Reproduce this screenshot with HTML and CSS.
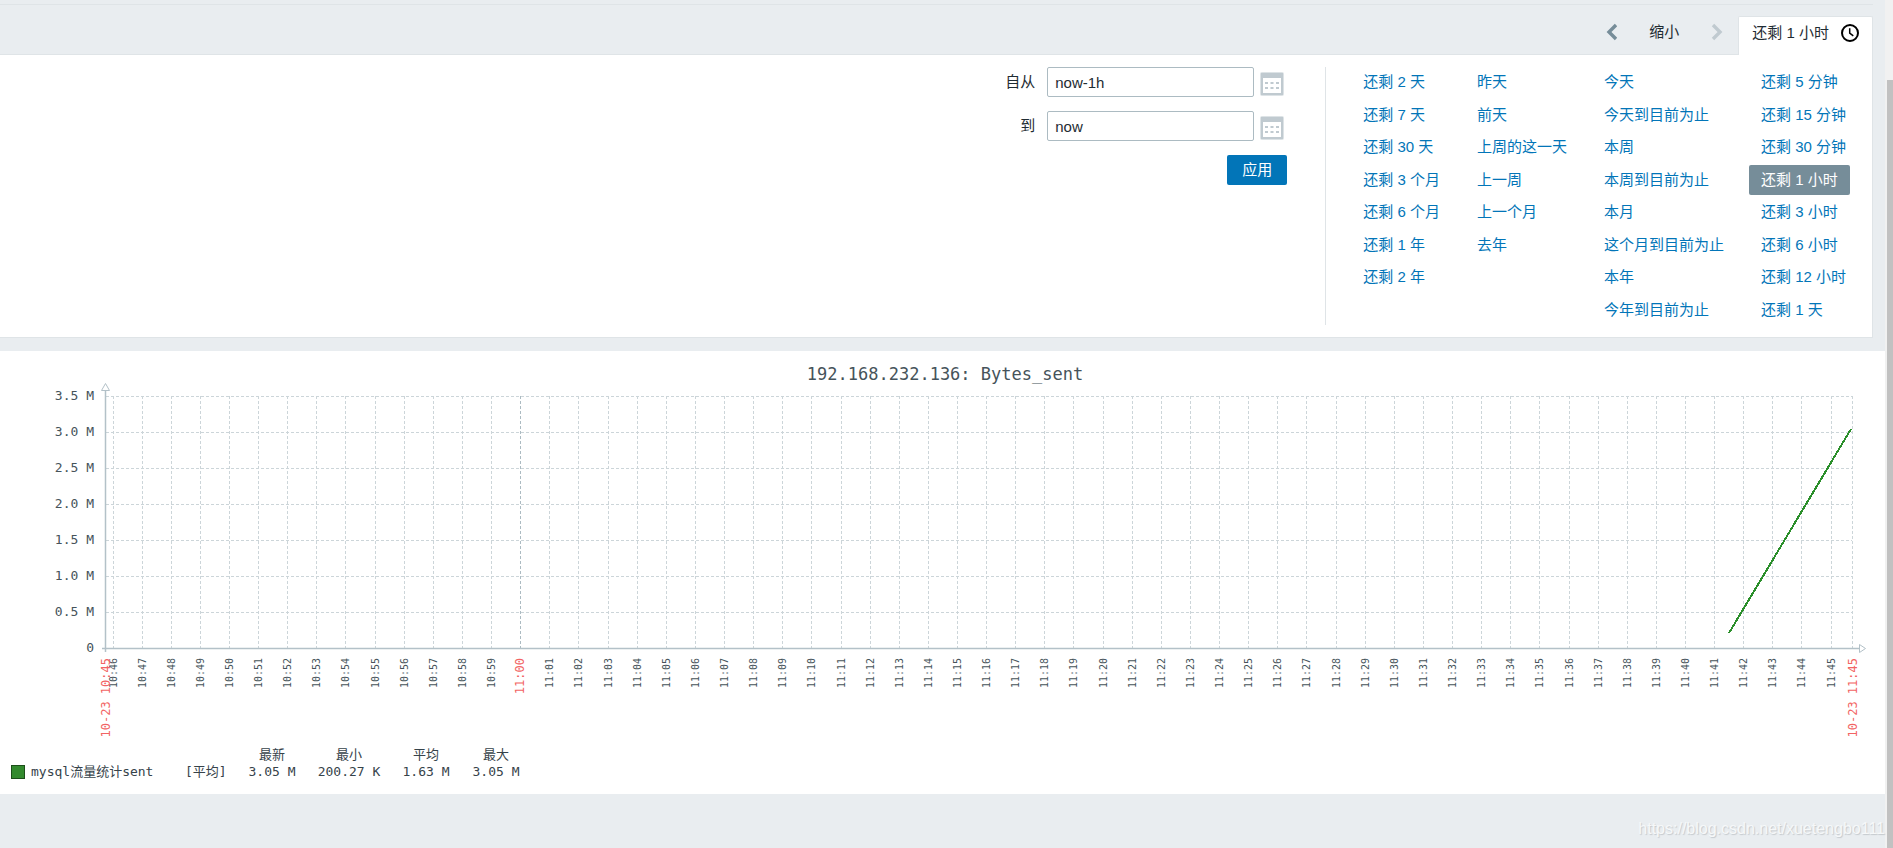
FILE: index.html
```html
<!DOCTYPE html>
<html lang="zh-CN">
<head>
<meta charset="utf-8">
<title>192.168.232.136: Bytes_sent</title>
<link rel="stylesheet" href="styles.css">
</head>
<body>
<div class="page">
  <main class="content">
    <section class="filter">
      <nav class="tabs">
        <button class="arrow" type="button" aria-label="上一段"><svg width="12" height="18" viewBox="0 0 12 18"><path d="M11 2L4 9l7 7" fill="none" stroke="#768d99" stroke-width="3.4"/></svg></button>
        <button class="zoom-out" type="button">缩小</button>
        <button class="arrow" type="button" aria-label="下一段" disabled><svg width="12" height="18" viewBox="0 0 12 18"><path d="M2 2l7 7-7 7" fill="none" stroke="#c0cad0" stroke-width="3.4"/></svg></button>
        <button class="tab" type="button">还剩 1 小时
          <svg width="18" height="18" viewBox="0 0 18 18"><circle cx="9" cy="9" r="8" fill="none" stroke="#000" stroke-width="2"/><path d="M8.7 4.2v5l3.6 2.6" fill="none" stroke="#000" stroke-width="1.5"/></svg>
        </button>
      </nav>
      <div class="panel">
        <form class="range">
          <label for="from">自从</label>
          <input id="from" type="text" value="now-1h">
          <button class="calendar" type="button" aria-label="选择开始时间"><svg width="24" height="24" viewBox="0 0 24 24"><use href="#calendar"/></svg></button>
          <label for="to">到</label>
          <input id="to" type="text" value="now">
          <button class="calendar" type="button" aria-label="选择结束时间"><svg width="24" height="24" viewBox="0 0 24 24"><use href="#calendar"/></svg></button>
          <button class="apply" type="button">应用</button>
        </form>
        <div class="presets">
          <ul>
            <li><a href="#">还剩 2 天</a></li><li><a href="#">还剩 7 天</a></li><li><a href="#">还剩 30 天</a></li><li><a href="#">还剩 3 个月</a></li><li><a href="#">还剩 6 个月</a></li><li><a href="#">还剩 1 年</a></li><li><a href="#">还剩 2 年</a></li>
          </ul>
          <ul>
            <li><a href="#">昨天</a></li><li><a href="#">前天</a></li><li><a href="#">上周的这一天</a></li><li><a href="#">上一周</a></li><li><a href="#">上一个月</a></li><li><a href="#">去年</a></li>
          </ul>
          <ul>
            <li><a href="#">今天</a></li><li><a href="#">今天到目前为止</a></li><li><a href="#">本周</a></li><li><a href="#">本周到目前为止</a></li><li><a href="#">本月</a></li><li><a href="#">这个月到目前为止</a></li><li><a href="#">本年</a></li><li><a href="#">今年到目前为止</a></li>
          </ul>
          <ul>
            <li><a href="#">还剩 5 分钟</a></li><li><a href="#">还剩 15 分钟</a></li><li><a href="#">还剩 30 分钟</a></li><li><a class="selected" href="#">还剩 1 小时</a></li><li><a href="#">还剩 3 小时</a></li><li><a href="#">还剩 6 小时</a></li><li><a href="#">还剩 12 小时</a></li><li><a href="#">还剩 1 天</a></li>
          </ul>
        </div>
      </div>
    </section>

    <section class="graph">
      <svg class="plot" id="plot" viewBox="0 0 1885 395">
        <defs>
          <g id="calendar">
            <rect x="1" y="1" width="22" height="22" rx="1" fill="#fff" stroke="#dde3e6" stroke-width="2"/>
            <path d="M1 1h22v22H1zM3 6v15h18V6z" fill="#c0cad0" fill-rule="evenodd"/>
            <path d="M5 10h3v2H5zM10.500 10h3v2h-3zM16 10h3v2h-3zM5 15h3v2H5zM10.500 15h3v2h-3zM16 15h3v2h-3z" fill="#c0cad0"/>
          </g>
        </defs>
        <text class="title" x="945" y="29">192.168.232.136: Bytes_sent</text>
        <g id="grid"></g>
        <path class="axis" d="M105.500 40V301M102 297.500H1859"/>
        <path class="tip" d="M101.500 39.500h8l-4-7zM1859.500 293.500v8l6-4z"/>
        <path class="series" d="M1729 282L1851 78"/>
        <g id="labels"></g>
      </svg>
      <table class="legend">
        <thead><tr><td></td><td></td><td></td><th>最新</th><th>最小</th><th>平均</th><th>最大</th></tr></thead>
        <tbody><tr><td class="key"><span class="swatch"></span></td><td class="name">mysql流量统计sent</td><td class="fn">[平均]</td><td class="value">3.05 M</td><td class="value wide">200.27 K</td><td class="value">1.63 M</td><td class="value">3.05 M</td></tr></tbody>
      </table>
    </section>
  </main>
  <div class="scrollbar"><div class="thumb"></div></div>
</div>
<div class="watermark">https://blog.csdn.net/xuetengbo111</div>
<script src="graph.js"></script>
</body>
</html>
```
FILE: styles.css
```css
* { box-sizing: border-box; }
body {
  margin: 0;
  background: #e9edf0;
  color: #1f2c33;
  font: 15px/20px "Liberation Sans", "Noto Sans CJK SC", sans-serif;
}
button, input { font: inherit; color: inherit; margin: 0; }
button { border: 0; background: none; padding: 0; }
svg { display: block; }
.page { display: flex; min-height: 100vh; }
.content { flex: 1; min-width: 0; padding-top: 4px; }

.filter {
  margin-right: 12px;
  border-top: 1px solid #dfe4e7;
}
.tabs {
  display: flex;
  justify-content: flex-end;
  align-items: center;
  padding-top: 11px;
}
.arrow { width: 12px; }
.zoom-out { margin: 0 32px; }
.tab {
  display: flex;
  align-items: center;
  gap: 12px;
  height: 39px;
  margin: 0 0 -1px 15px;
  padding: 0 13px 6px 13px;
  background: #fff;
  border: 1px solid #dfe4e7;
  border-bottom: 0;
  border-radius: 2px 2px 0 0;
}
.arrow, .zoom-out { padding-bottom: 6px; }
.panel {
  display: flex;
  justify-content: flex-end;
  padding: 12px 14px 12px 0;
  background: #fff;
  border: 1px solid #dfe4e7;
  border-left: 0;
}
.range {
  display: grid;
  grid-template-columns: auto 207px 24px;
  grid-auto-rows: 30px;
  row-gap: 14px;
  align-items: center;
  align-content: start;
  padding-right: 47px;
}
.range label { padding-right: 12px; text-align: right; }
.range input {
  width: 207px;
  height: 30px;
  padding: 0 7px;
  border: 1px solid #acbbc2;
  border-radius: 2px;
  background: #fff;
}
.calendar { padding: 3px 0 0 6px; }
.apply {
  grid-column: 2 / 4;
  justify-self: end;
  width: 60px;
  height: 30px;
  margin-right: -9px;
  border-radius: 2px;
  background: #0275b8;
  color: #fff;
}
.presets {
  display: flex;
  gap: 13px;
  min-height: 258px;
  padding-left: 25px;
  border-left: 1px solid #dfe4e7;
}
.presets ul {
  display: grid;
  grid-template-rows: repeat(8, 30px);
  align-content: space-between;
  margin: 0;
  padding: 0;
  list-style: none;
}
.presets a {
  display: block;
  width: fit-content;
  padding: 5px 12px;
  border-radius: 2px;
  color: #0275b8;
  text-decoration: none;
  white-space: nowrap;
}
.presets .selected { background: #768d99; color: #fff; }

.graph {
  margin-top: 13px;
  padding-bottom: 14px;
  background: #fff;
  color: #36434a;
  font: 13px/17px "DejaVu Sans Mono", "Noto Sans CJK SC", monospace;
}
.plot { width: 100%; height: auto; }
.plot text { fill: #46535a; }
.plot .title { font-size: 17px; text-anchor: middle; }
.plot .scale, .plot .minute, .plot .major { text-anchor: end; }
.plot .scale { font-size: 13px; }
.plot .minute { font-size: 10px; }
.plot .major { font-size: 12px; fill: #f26464; }
.gridline { stroke: #ccd5d9; stroke-dasharray: 3 2; shape-rendering: crispEdges; }
.gridline.hour { stroke: #acbbc2; }
.axis { fill: none; stroke: #b3c1c8; stroke-width: 1.5; }
.tip { fill: #fff; stroke: #b3c1c8; }
.series { stroke: #2b8f2b; stroke-width: 2; shape-rendering: crispEdges; }

.legend { margin-left: 11px; border-collapse: collapse; white-space: nowrap; }
.legend td, .legend th { padding: 0; font-weight: normal; }
.key { width: 20px; }
.swatch {
  display: block;
  width: 14px;
  height: 14px;
  background: #338a2e;
  border: 1px solid #1c4f1a;
}
.name { width: 154px; }
.fn { width: 52px; }
.value { width: 70px; text-align: center; }
.wide { width: 84px; }

.scrollbar { width: 8px; padding: 80px 0 0 2px; background: #f1f1f1; display: flex; }
.thumb { flex: 1; background: #c1c1c1; }
.watermark {
  position: absolute;
  right: 8px;
  bottom: 9px;
  color: #f6f8f9;
  font-size: 16px;
  text-shadow: 1px 1px 1px #c4c9cd;
}
```
FILE: graph.js
```js
const NS = 'http://www.w3.org/2000/svg';
const grid = document.getElementById('grid');
const labels = document.getElementById('labels');
const LEFT = 106, RIGHT = 1852, TOP = 45, BOTTOM = 297;

function line(x1, y1, x2, y2, cls) {
  const el = document.createElementNS(NS, 'line');
  Object.entries({ x1, y1, x2, y2, class: cls }).forEach(([k, v]) => el.setAttribute(k, v));
  grid.append(el);
}
function text(x, y, cls, value, rotated) {
  const el = document.createElementNS(NS, 'text');
  el.setAttribute('class', cls);
  if (rotated) el.setAttribute('transform', `translate(${x} ${y}) rotate(-90)`);
  else { el.setAttribute('x', x); el.setAttribute('y', y); }
  el.textContent = value;
  labels.append(el);
}

for (let i = 0; i <= 7; i++) {
  const y = Math.round(BOTTOM - i * (BOTTOM - TOP) / 7);
  if (i) line(LEFT, y + 0.5, RIGHT, y + 0.5, 'gridline');
  text(94, y + 4, 'scale', i ? (i / 2).toFixed(1) + ' M' : '0');
}
for (let i = 0; i < 60; i++) {
  const x = Math.floor(113 + i * 29.12);
  const minute = 46 + i;
  const hour = minute === 60;
  const label = (10 + Math.floor(minute / 60)) + ':' + String(minute % 60).padStart(2, '0');
  line(x + 0.5, TOP, x + 0.5, BOTTOM, hour ? 'gridline hour' : 'gridline');
  text(x + 4, 307, hour ? 'major' : 'minute', label, true);
}
line(RIGHT + 0.5, TOP, RIGHT + 0.5, BOTTOM, 'gridline');
text(110, 307, 'major', '10-23 10:45', true);
text(1857, 307, 'major', '10-23 11:45', true);
```
